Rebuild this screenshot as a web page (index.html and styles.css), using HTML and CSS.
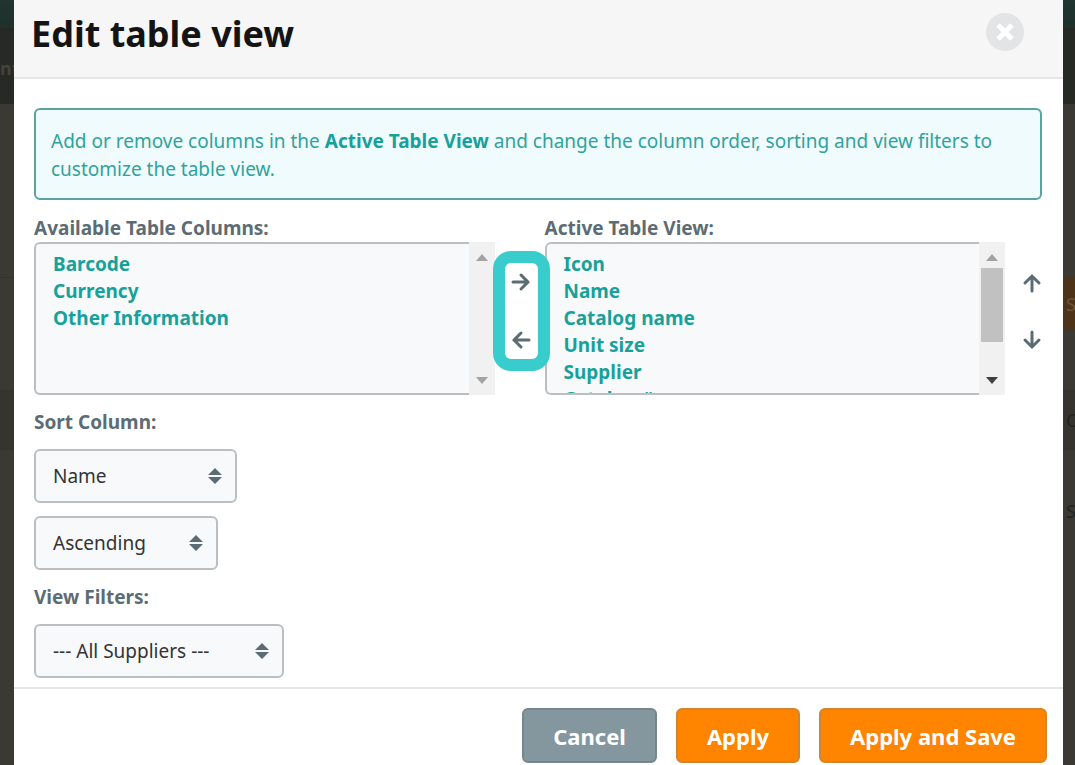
FILE: index.html
```html
<!DOCTYPE html>
<html lang="en">
<head>
<meta charset="utf-8">
<meta name="viewport" content="width=device-width, initial-scale=1">
<title>Edit table view</title>
<link rel="stylesheet" href="styles.css">
</head>
<body>
<div class="page">
  <div class="backdrop" aria-hidden="true">
    <div class="backdrop-top"></div>
    <div class="backdrop-nav"><span>nt</span></div>
    <div class="backdrop-area"></div>
    <div class="backdrop-row"></div>
    <div class="backdrop-band"></div>
  </div>

  <form class="modal" role="dialog" aria-labelledby="title">
    <header class="modal-header">
      <h1 class="modal-title" id="title">Edit table view</h1>
      <button class="close" type="button" aria-label="Close">
        <svg viewBox="0 0 38 38" width="38" height="38"><circle cx="19" cy="19" r="19" fill="#e2e4e5"/><path d="M12 12 26 26M26 12 12 26" stroke="#fff" stroke-width="5"/></svg>
      </button>
    </header>

    <div class="modal-body">
      <p class="notice">Add or remove columns in the <strong>Active Table View</strong> and change the column order, sorting and view filters to customize the table view.</p>

      <div class="columns">
        <div class="list-field">
          <label class="label" for="available">Available Table Columns:</label>
          <div class="list">
            <select class="list-box" id="available" multiple>
              <option>Barcode</option>
              <option>Currency</option>
              <option>Other Information</option>
            </select>
            <div class="scrollbar" aria-hidden="true">
              <svg viewBox="0 0 12 7" width="12" height="7"><path d="M0 7 6 0l6 7z" fill="#a3a3a3"/></svg>
              <svg viewBox="0 0 12 7" width="12" height="7"><path d="M0 0h12L6 7z" fill="#a3a3a3"/></svg>
            </div>
          </div>
        </div>

        <div class="transfer">
          <button class="arrow" type="button" aria-label="Add column"><svg viewBox="0 0 20 20" width="20" height="20"><path d="M2 10h15M10 3l7 7-7 7"/></svg></button>
          <button class="arrow" type="button" aria-label="Remove column"><svg viewBox="0 0 20 20" width="20" height="20"><path d="M18 10H3M10 3l-7 7 7 7"/></svg></button>
        </div>

        <div class="list-field">
          <label class="label" for="active">Active Table View:</label>
          <div class="list">
            <select class="list-box" id="active" multiple>
              <option>Icon</option>
              <option>Name</option>
              <option>Catalog name</option>
              <option>Unit size</option>
              <option>Supplier</option>
              <option>Catalog #</option>
            </select>
            <div class="scrollbar" aria-hidden="true">
              <svg viewBox="0 0 12 7" width="12" height="7"><path d="M0 7 6 0l6 7z" fill="#a3a3a3"/></svg>
              <span class="thumb"></span>
              <svg viewBox="0 0 12 7" width="12" height="7"><path d="M0 0h12L6 7z" fill="#404040"/></svg>
            </div>
          </div>
        </div>

        <div class="reorder">
          <button class="arrow" type="button" aria-label="Move up"><svg viewBox="0 0 20 20" width="20" height="20"><path d="M10 18V3M3 10l7-7 7 7"/></svg></button>
          <button class="arrow" type="button" aria-label="Move down"><svg viewBox="0 0 20 20" width="20" height="20"><path d="M10 2v15M3 10l7 7 7-7"/></svg></button>
        </div>
      </div>

      <div class="field">
        <label class="label" for="sort">Sort Column:</label>
        <div class="picker">
          <select class="select select-name" id="sort"><option>Name</option></select>
          <svg class="caret" viewBox="0 0 14 16" width="14" height="16"><path d="M0 7 7 0l7 7zM0 9h14l-7 7z"/></svg>
        </div>
        <div class="picker">
          <select class="select select-order" aria-label="Sort order"><option>Ascending</option></select>
          <svg class="caret" viewBox="0 0 14 16" width="14" height="16"><path d="M0 7 7 0l7 7zM0 9h14l-7 7z"/></svg>
        </div>
      </div>

      <div class="field">
        <label class="label" for="filter">View Filters:</label>
        <div class="picker">
          <select class="select select-filter" id="filter"><option>--- All Suppliers ---</option></select>
          <svg class="caret" viewBox="0 0 14 16" width="14" height="16"><path d="M0 7 7 0l7 7zM0 9h14l-7 7z"/></svg>
        </div>
      </div>
    </div>

    <footer class="modal-footer">
      <button class="button button-cancel" type="button">Cancel</button>
      <button class="button" type="button">Apply</button>
      <button class="button" type="submit">Apply and Save</button>
    </footer>
  </form>

  <div class="backdrop" aria-hidden="true">
    <div class="backdrop-top"></div>
    <div class="backdrop-nav"></div>
    <div class="backdrop-area"></div>
    <div class="backdrop-action"><span>S</span></div>
    <div class="backdrop-gap"></div>
    <div class="backdrop-band"><span>C</span></div>
    <div class="backdrop-cell"><span>S</span></div>
  </div>
</div>
</body>
</html>
```
FILE: styles.css
```css
* { box-sizing: border-box; }

body {
  margin: 0;
  font-family: "Noto Sans", "Open Sans", sans-serif;
  font-size: 19px;
  background: #3a3933;
}

.page {
  display: grid;
  grid-template-columns: 14px minmax(0, 1fr) 12px;
  min-height: 100vh;
}

/* Dimmed page behind the dialog */
.backdrop {
  display: flex;
  flex-direction: column;
  overflow: hidden;
  font-size: 18px;
  color: #24241f;
}
.backdrop div { flex: none; display: flex; align-items: center; }
.backdrop-top { height: 28px; background: linear-gradient(#1f352f, #20302b); }
.backdrop-nav { height: 76px; padding-top: 4px; background: #272925; color: #42433f; font-weight: 700; }
.backdrop-area { height: 173px; }
.backdrop-row { height: 113px; border-top: 1px solid #33322d; }
.backdrop-band { height: 60px; background: #35342f; }
.backdrop-action { height: 53px; background: #4e3319; color: #69553f; }
.backdrop-gap { height: 60px; }
.backdrop-cell { height: 122px; }
.backdrop-action span,
.backdrop-band span,
.backdrop-cell span { padding-left: 3px; }

.modal {
  display: flex;
  flex-direction: column;
  background: #fff;
}

.modal-header {
  display: flex;
  justify-content: space-between;
  align-items: flex-start;
  padding: 9px 39px 18px 17px;
  background: #f6f6f6;
  border-bottom: 2px solid #e6e6e6;
}
.modal-title {
  margin: 0;
  font-size: 36px;
  line-height: 50px;
  font-weight: 700;
  color: #141414;
}
.close {
  margin: 4px 0 0;
  padding: 0;
  border: 0;
  background: none;
  line-height: 0;
}

.modal-body { flex: 1; padding: 29px 21px 9px 20px; }

.notice {
  margin: 0;
  padding: 17px 15px 15px;
  border: 2px solid #5aa3a4;
  border-radius: 6px;
  background: #effbfc;
  color: #2fa39d;
  line-height: 28px;
}
.notice strong { color: #17a19b; }

.columns {
  display: grid;
  grid-template-columns: minmax(0, 1fr) 50px minmax(0, 1fr) 37px;
  margin-top: 14px;
}

.label {
  display: block;
  font-weight: 700;
  line-height: 28px;
  color: #5c6c74;
}

.list { display: flex; height: 153px; }
.list-box {
  flex: 1;
  min-width: 0;
  height: 100%;
  padding: 7px 17px;
  overflow: hidden;
  border: 2px solid #bcbfc2;
  border-right: 0;
  border-radius: 6px 0 0 6px;
  background: #f7f9fa;
  font: inherit;
  outline: 0;
}
.list-box option {
  padding: 0;
  min-height: 27px;
  font-weight: 700;
  color: #17a19b;
}
.scrollbar {
  display: flex;
  flex-direction: column;
  justify-content: space-between;
  align-items: center;
  width: 26px;
  padding: 12px 0 11px;
  background: #f1f1f1;
}
.thumb { width: 22px; height: 74px; margin: 7px 0 auto; background: #c1c1c1; }

.arrow {
  display: flex;
  padding: 0;
  border: 0;
  background: none;
  color: #5c6c74;
}
.arrow svg { fill: none; stroke: currentColor; stroke-width: 3; stroke-linecap: round; }

/* Highlight frame overlaps the edges of both lists */
.transfer {
  position: relative;
  z-index: 1;
  display: flex;
  flex-direction: column;
  align-items: center;
  justify-content: space-between;
  height: 120px;
  margin: 37px -5px 0 -2px;
  padding: 9px 0;
  border: 12px solid #38cccc;
  border-radius: 18px;
  background: #fff;
}
.reorder {
  display: flex;
  flex-direction: column;
  align-items: flex-end;
  gap: 37px;
  padding-top: 59px;
}

.field { display: flex; flex-direction: column; align-items: flex-start; gap: 13px; margin-top: 13px; }
.picker { display: grid; align-items: center; justify-items: end; }
.select, .caret { grid-area: 1 / 1; }
.select {
  appearance: none;
  height: 54px;
  padding: 0 17px;
  border: 2px solid #bcbfc2;
  border-radius: 6px;
  background: #f7f9fa;
  font: inherit;
  color: #333;
}
.select-name { width: 203px; }
.select-order { width: 184px; }
.select-filter { width: 250px; }
.caret { margin-right: 15px; fill: #5c6c74; pointer-events: none; }

.modal-footer {
  display: flex;
  justify-content: flex-end;
  gap: 19px;
  padding: 19px 16px 2px;
  border-top: 2px solid #e6e6e6;
}
.button {
  height: 55px;
  padding: 0 29px;
  border: 2px solid #d4852c;
  border-radius: 6px;
  background: #ff8400;
  color: #fff;
  font: inherit;
  font-size: 22px;
  font-weight: 700;
}
.button-cancel { border-color: #75868d; background: #84979f; }
```
